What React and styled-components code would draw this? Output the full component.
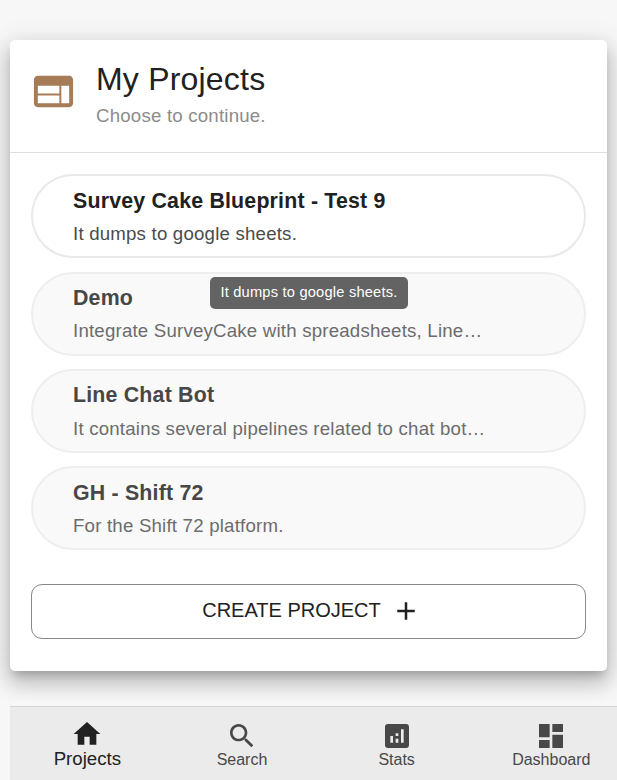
import React from "react";
import styled, { createGlobalStyle } from "styled-components";

const GlobalStyle = createGlobalStyle`
  * { box-sizing: border-box; }
  body {
    margin: 0;
    background: #f7f7f7;
    color: #212121;
    font-family: "Liberation Sans", Arial, sans-serif;
    overflow: hidden;
  }
`;

const Page = styled.div`
  height: 780px;
  padding: 40px 0 0 10px;
  display: flex;
  flex-direction: column;
  justify-content: space-between;
  overflow: hidden;
`;

const Card = styled.main`
  width: 597px;
  height: 631px;
  border-radius: 5px;
  background: #fff;
  box-shadow:
    0 7px 9px -4px rgba(0, 0, 0, 0.2),
    0 13px 19px 2px rgba(0, 0, 0, 0.14),
    0 5px 24px 4px rgba(0, 0, 0, 0.12);
`;

const Header = styled.header`
  display: flex;
  height: 113px;
  padding: 19px 20px 0;
  border-bottom: 1px solid #dedede;
`;

const Heading = styled.div`
  margin-left: 19px;
`;

const Title = styled.h1`
  margin: 0;
  font-size: 32px;
  font-weight: 400;
  letter-spacing: 0.2px;
  line-height: 40px;
`;

const Subtitle = styled.p`
  margin: 3px 0 0;
  color: #8c8c8c;
  font-size: 18.67px;
  letter-spacing: 0.2px;
  line-height: 28px;
`;

const Icon = styled.svg`
  display: block;
  flex: none;
  width: ${(p) => p.$size}px;
  height: ${(p) => p.$size}px;
  margin-top: ${(p) => p.$top || 0}px;
  fill: ${(p) => p.$color || "currentColor"};
`;

const ProjectList = styled.div`
  display: grid;
  gap: 13.33px;
  padding: 21.2px 21px 0;
`;

const ProjectItem = styled.div`
  position: relative;
  height: 84px;
  padding: 6.5px 40px 0;
  border: 2px solid ${(p) => (p.$active ? "#e9e9e9" : "#eeeeee")};
  border-radius: 42px;
  background: ${(p) => (p.$active ? "#fff" : "#f9f9f9")};
  color: ${(p) => (p.$active ? "#212121" : "#474747")};
`;

const ProjectName = styled.div`
  padding-top: 2px;
  font-size: 21.33px;
  font-weight: 700;
  letter-spacing: 0.2px;
  line-height: 32px;
`;

const ProjectText = styled.div`
  margin-top: 3.3px;
  color: ${(p) => (p.$active ? "#4b4b4b" : "#6c6c6c")};
  font-size: 18.67px;
  letter-spacing: 0.2px;
  line-height: 27px;
  white-space: nowrap;
`;

const Tooltip = styled.div`
  position: absolute;
  z-index: 1;
  top: 100.8px;
  left: 177px;
  width: 198px;
  height: 32px;
  border-radius: 5px;
  background: #636363;
  color: #fff;
  font-size: 14.67px;
  letter-spacing: 0.2px;
  line-height: 31px;
  text-align: center;
  white-space: nowrap;
`;

const CreateButton = styled.button`
  display: flex;
  align-items: center;
  justify-content: center;
  gap: 10px;
  width: 555px;
  height: 55px;
  margin: 33.8px 21px 0;
  padding: 0 0 0 6px;
  border: 1px solid #888;
  border-radius: 11px;
  background: #fff;
  color: #212121;
  font-family: inherit;
  font-size: 20px;
  line-height: 28px;
`;

const ButtonLabel = styled.span`
  margin-top: -2px;
`;

const Nav = styled.nav`
  display: grid;
  grid-template-columns: repeat(4, 154.67px);
  height: 74px;
  border-top: 1px solid #d3d3d3;
  background: #ebebeb;
`;

const NavItem = styled.div`
  display: flex;
  flex-direction: column;
  align-items: center;
  padding-top: ${(p) => (p.$active ? 11 : 13)}px;
  color: ${(p) => (p.$active ? "#212121" : "#484848")};
  font-size: ${(p) => (p.$active ? 18.67 : 16)}px;
  line-height: ${(p) => (p.$active ? 18 : 16)}px;
`;

const PATHS = {
  web: "M20 4H4c-1.1 0-1.99.9-1.99 2L2 18c0 1.1.9 2 2 2h16c1.1 0 2-.9 2-2V6c0-1.1-.9-2-2-2zm-5 14H4v-4h11v4zm0-5H4V9h11v4zm5 5h-4V9h4v9z",
  add: "M19 13h-6v6h-2v-6H5v-2h6V5h2v6h6v2z",
  home: "M10 20v-6h4v6h5v-8h3L12 3 2 12h3v8z",
  search:
    "M15.5 14h-.79l-.28-.27C15.41 12.59 16 11.11 16 9.5 16 5.91 13.09 3 9.5 3S3 5.91 3 9.5 5.91 16 9.5 16c1.61 0 3.09-.59 4.23-1.57l.27.28v.79l5 4.99L20.49 19l-4.99-5zm-6 0C7.01 14 5 11.99 5 9.5S7.01 5 9.5 5 14 7.01 14 9.5 11.99 14 9.5 14z",
  stats:
    "M19 3H5c-1.1 0-2 .9-2 2v14c0 1.1.9 2 2 2h14c1.1 0 2-.9 2-2V5c0-1.1-.9-2-2-2zM9 17H7v-5h2v5zm4 0h-2v-3h2v3zm0-5h-2v-2h2v2zm4 5h-2V7h2v10z",
  dashboard: "M3 13h8V3H3v10zm0 8h8v-6H3v6zm10 0h8V11h-8v10zm0-18v6h8V3h-8z",
};

function Glyph({ name, size, color, top }) {
  return (
    <Icon viewBox="0 0 24 24" $size={size} $color={color} $top={top} aria-hidden="true">
      <path d={PATHS[name]} />
    </Icon>
  );
}

const projects = [
  { name: "Survey Cake Blueprint - Test 9", text: "It dumps to google sheets.", active: true },
  { name: "Demo", text: "Integrate SurveyCake with spreadsheets, Line…" },
  { name: "Line Chat Bot", text: "It contains several pipelines related to chat bot…" },
  { name: "GH - Shift 72", text: "For the Shift 72 platform." },
];

const tabs = [
  { label: "Projects", icon: "home", active: true },
  { label: "Search", icon: "search" },
  { label: "Stats", icon: "stats" },
  { label: "Dashboard", icon: "dashboard" },
];

export default function App() {
  return (
    <>
      <GlobalStyle />
      <Page>
        <Card>
          <Header>
            <Glyph name="web" size={47} color="#a67c56" top={9} />
            <Heading>
              <Title>My Projects</Title>
              <Subtitle>Choose to continue.</Subtitle>
            </Heading>
          </Header>
          <ProjectList>
            {projects.map((p) => (
              <ProjectItem key={p.name} $active={p.active}>
                <ProjectName>{p.name}</ProjectName>
                <ProjectText $active={p.active}>{p.text}</ProjectText>
                {p.active && <Tooltip role="tooltip">{p.text}</Tooltip>}
              </ProjectItem>
            ))}
          </ProjectList>
          <CreateButton>
            <ButtonLabel>CREATE PROJECT</ButtonLabel>
            <Glyph name="add" size={30} />
          </CreateButton>
        </Card>
        <Nav>
          {tabs.map((t) => (
            <NavItem key={t.label} $active={t.active}>
              <Glyph name={t.icon} size={32} />
              {t.label}
            </NavItem>
          ))}
        </Nav>
      </Page>
    </>
  );
}
